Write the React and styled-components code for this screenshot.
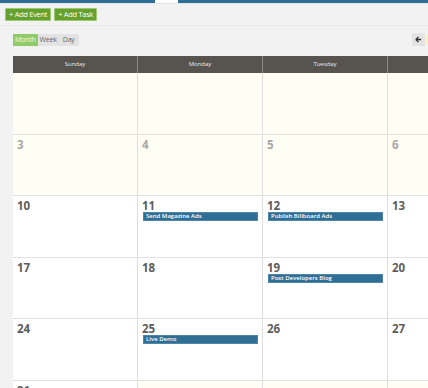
import React from "react";
import styled, { createGlobalStyle } from "styled-components";

const GlobalStyle = createGlobalStyle`
  html, body {
    margin: 0;
    padding: 0;
    background: #f2f2f2;
    overflow: hidden;
    font-family: "Open Sans", "Liberation Sans", sans-serif;
  }
  * { box-sizing: border-box; }
`;

const Page = styled.div`
  width: 428px;
  height: 388px;
  overflow: hidden;
  background: #f2f2f2;
`;
const TopBar = styled.div`
  display: flex;
  height: 4px;
  border-bottom: 1px solid #dfe6ea;
`;
const TopSeg = styled.div`
  height: 3px;
  width: ${(p) => (p.w ? p.w + "px" : "auto")};
  flex: ${(p) => (p.w ? "none" : "1")};
  background: ${(p) => (p.active ? "#ffffff" : "#2f6f96")};
`;
const Toolbar = styled.div`
  display: flex;
  gap: 3px;
  padding: 4px 5px 4px;
  border-bottom: 1px solid #e8e8e8;
`;
const GreenButton = styled.button`
  height: 13px;
  padding: 0 3px;
  font-family: "Open Sans", sans-serif;
  font-size: 7.5px;
  line-height: 11px;
  color: #fff;
  background: #67a12d;
  border: 1px solid #9cc872;
  border-radius: 1px;
  letter-spacing: -0.3px;
`;
const ViewRow = styled.div`
  display: flex;
  justify-content: space-between;
  align-items: center;
  padding: 7px 0 10px 13px;
`;
const Tabs = styled.div`
  display: flex;
  background: #e3e3e3;
  height: 12px;
`;
const Tab = styled.div`
  padding: 0 ${(p) => p.pad || 2}px;
  font-size: 7px;
  line-height: 12px;
  letter-spacing: -0.2px;
  color: ${(p) => (p.active ? "#f2fbe8" : "#666")};
  background: ${(p) => (p.active ? "#8fcb68" : "transparent")};
`;
const RightGroup = styled.div`
  display: flex;
  gap: 1px;
  margin-right: -4px;
`;
const IconButton = styled.div`
  width: 13px;
  height: 13px;
  background: #e4e4e4;
  display: flex;
  align-items: center;
  justify-content: center;
`;
const CutButton = styled.div`
  width: 6px;
  height: 9px;
  margin-top: 2px;
  background: #fbeec0;
`;
const Calendar = styled.div`
  margin-left: 13px;
  width: 500px;
`;
const HeadRow = styled.div`
  display: grid;
  grid-template-columns: repeat(4, 125px);
  height: 17px;
  background: #57544f;
`;
const HeadCell = styled.div`
  color: #ecebea;
  font-size: 6px;
  line-height: 17px;
  text-align: center;
  border-right: 1px solid #8a8884;
`;
const Week = styled.div`
  display: grid;
  grid-template-columns: repeat(4, 125px);
  height: ${(p) => p.h}px;
`;
const Cell = styled.div`
  background: ${(p) => (p.faded ? "#fefef4" : "#ffffff")};
  border-right: 1px solid #dedede;
  border-bottom: 1px solid #e2e2e2;
  padding: 3px 4px 0 4px;
  overflow: hidden;
`;
const DayNum = styled.div`
  font-size: 11.5px;
  font-weight: 700;
  line-height: 13px;
  height: 13px;
  color: ${(p) => (p.faded ? "#a8a8a8" : "#5d5d5d")};
`;
const EventBar = styled.div`
  margin: 0 0 0 1px;
  height: 9px;
  background: #2f6f96;
  border: 1px solid #4f86a8;
  color: #fff;
  font-size: 6px;
  font-weight: 600;
  line-height: 7px;
  padding-left: 2px;
  white-space: nowrap;
`;

const ArrowIcon = () => (
  <svg width="7" height="7" viewBox="0 0 8 8">
    <path d="M1 4 L4 1 M1 4 L4 7 M1 4 H7" stroke="#333" strokeWidth="1.6" fill="none" />
  </svg>
);

const days = ["Sunday", "Monday", "Tuesday", "Wednesday"];

const weeks = [
  { h: 62, cells: Array(4).fill({ n: "", faded: true }) },
  { h: 61, cells: [3, 4, 5, 6].map((n) => ({ n, faded: true })) },
  { h: 62, cells: [10, 11, 12, 13].map((n) => ({ n })) },
  { h: 61, cells: [17, 18, 19, 20].map((n) => ({ n })) },
  { h: 62, cells: [24, 25, 26, 27].map((n) => ({ n })) },
  { h: 62, cells: [{ n: 31 }, ...[0, 0, 0].map(() => ({ n: "", faded: true }))] },
];

const events = {
  11: "Send Magazine Ads",
  12: "Publish Billboard Ads",
  19: "Post Developers Blog",
  25: "Live Demo",
};

export default function App() {
  return (
    <Page>
      <GlobalStyle />
      <TopBar>
        <TopSeg w={155} />
        <TopSeg w={23} active />
        <TopSeg />
      </TopBar>
      <Toolbar>
        <GreenButton>+ Add Event</GreenButton>
        <GreenButton>+ Add Task</GreenButton>
      </Toolbar>
      <ViewRow>
        <Tabs>
          <Tab active>Month</Tab>
          <Tab>Week</Tab>
          <Tab pad={4}>Day</Tab>
        </Tabs>
        <RightGroup>
          <IconButton>
            <ArrowIcon />
          </IconButton>
          <CutButton />
        </RightGroup>
      </ViewRow>
      <Calendar>
        <HeadRow>
          {days.map((d, i) => (
            <HeadCell key={d}>{i < 3 ? d : ""}</HeadCell>
          ))}
        </HeadRow>
        {weeks.map((w, i) => (
          <Week key={i} h={w.h}>
            {w.cells.map((c, j) => (
              <Cell key={j} faded={c.faded}>
                <DayNum faded={c.faded}>{c.n}</DayNum>
                {!c.faded && events[c.n] && <EventBar>{events[c.n]}</EventBar>}
              </Cell>
            ))}
          </Week>
        ))}
      </Calendar>
    </Page>
  );
}
